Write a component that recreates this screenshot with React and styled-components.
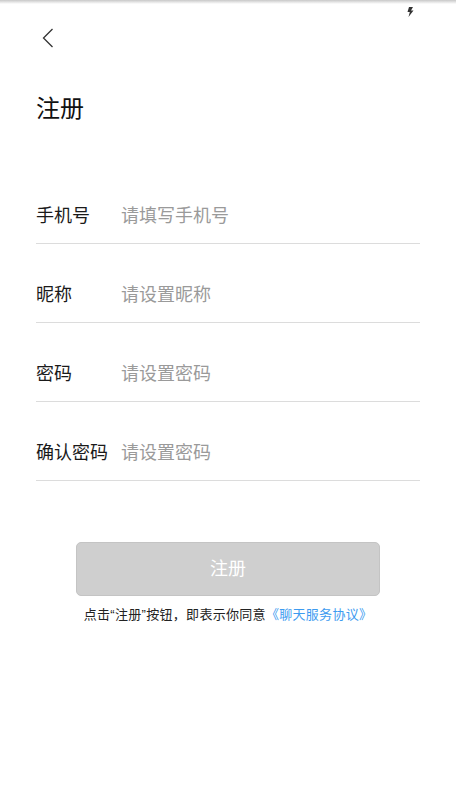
import React from "react";
import styled, { createGlobalStyle } from "styled-components";

const Global = createGlobalStyle`
  html, body { margin: 0; padding: 0; background: #fff; }
  body { font-family: "Noto Sans CJK SC", "Noto Sans", sans-serif; }
  * { box-sizing: border-box; }
`;

const Screen = styled.div`
  position: relative;
  width: 456px;
  min-height: 811px;
  background: #fff;
  &::before {
    content: "";
    position: absolute;
    left: 0; right: 0; top: 0;
    height: 4px;
    background: linear-gradient(#c8c8c8, rgba(255,255,255,0));
  }
`;

const StatusIcon = styled.svg`
  position: absolute;
  left: 407px;
  top: 7px;
`;

const Content = styled.div`
  display: flex;
  flex-direction: column;
  padding: 20px 36px 0;
`;

const BackButton = styled.button`
  display: flex;
  align-items: center;
  width: 40px;
  height: 36px;
  padding: 0 0 0 6px;
  border: 0;
  background: none;
  cursor: pointer;
`;

const Title = styled.h1`
  margin: 35px 0 0;
  font-size: 24px;
  line-height: 32px;
  font-weight: 400;
  color: #111;
`;

const Form = styled.div`
  display: flex;
  flex-direction: column;
  margin-top: 42px;
`;

const Row = styled.label`
  display: flex;
  align-items: center;
  padding: 37px 0 17px;
  border-bottom: 1px solid #dcdcdc;
`;

const Label = styled.span`
  flex: 0 0 85px;
  font-size: 18px;
  line-height: 24px;
  color: #1a1a1a;
`;

const Input = styled.input`
  flex: 1;
  min-width: 0;
  border: 0;
  outline: none;
  padding: 0;
  font-family: inherit;
  font-size: 18px;
  line-height: 24px;
  height: 24px;
  color: #222;
  background: transparent;
  &::placeholder { color: #9a9a9a; }
`;

const Submit = styled.button`
  align-self: center;
  width: 304px;
  height: 54px;
  margin-top: 61px;
  padding: 0 0 4px;
  border: 1px solid #c4c4c4;
  border-radius: 5px;
  background: #cfcfcf;
  color: #fff;
  font-family: inherit;
  font-size: 18px;
  line-height: 24px;
`;

const Agreement = styled.p`
  margin: 8px 0 0;
  text-align: center;
  font-size: 13px;
  line-height: 20px;
  letter-spacing: 0.3px;
  color: #222;
`;

const Quote = styled.span`
  font-family: "Liberation Sans", sans-serif;
`;

const Link = styled.a`
  color: #3d9bf0;
  text-decoration: none;
`;

const fields = [
  { label: "手机号", placeholder: "请填写手机号", type: "tel" },
  { label: "昵称", placeholder: "请设置昵称", type: "text" },
  { label: "密码", placeholder: "请设置密码", type: "password" },
  { label: "确认密码", placeholder: "请设置密码", type: "password" },
];

export default function App() {
  return (
    <Screen>
      <Global />
      <StatusIcon width="7" height="10" viewBox="0 0 7 10">
        <path d="M2 0 L6 0 L4 3.5 L6.5 3.5 L1.5 10 L2.8 5 L0.5 5 Z" fill="#333" />
      </StatusIcon>
      <Content>
        <BackButton aria-label="返回">
          <svg width="12" height="20" viewBox="0 0 12 20">
            <path d="M10.5 1 L1.5 10 L10.5 19" fill="none" stroke="#333" strokeWidth="1.3" />
          </svg>
        </BackButton>
        <Title>注册</Title>
        <Form>
          {fields.map((f) => (
            <Row key={f.label}>
              <Label>{f.label}</Label>
              <Input type={f.type} placeholder={f.placeholder} />
            </Row>
          ))}
        </Form>
        <Submit>注册</Submit>
        <Agreement>
          点击<Quote>“</Quote>注册<Quote>”</Quote>按钮，即表示你同意<Link>《聊天服务协议》</Link>
        </Agreement>
      </Content>
    </Screen>
  );
}
